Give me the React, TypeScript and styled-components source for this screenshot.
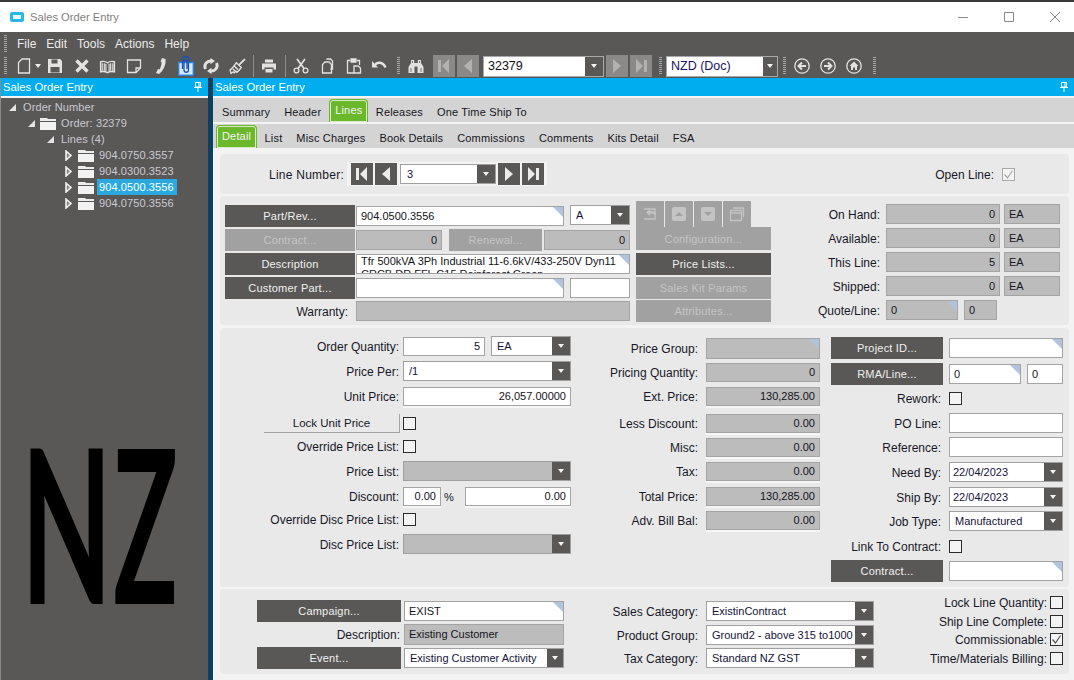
import React, { FC, ReactNode } from "react";
import styled, { createGlobalStyle } from "styled-components";

const GlobalStyle = createGlobalStyle`
  html, body {
    margin: 0;
    height: 680px;
    overflow: hidden;
    background: #f3f3f3;
  }
  * { box-sizing: border-box; }
  body {
    font-family: "Liberation Sans", Arial, sans-serif;
    font-size: 12px;
  }
`;

const Window = styled.div`
  width: 1074px;
  height: 680px;
  display: flex;
  flex-direction: column;
  border-top: 2px solid #3a3a3a;
  overflow: hidden;
`;

const TitleBar = styled.div`
  height: 30px;
  flex: none;
  background: #fff;
  display: flex;
  align-items: center;
  padding-left: 10px;
  color: #808080;
  font-size: 11.2px;
  gap: 6px;
`;

const AppIcon = styled.span`
  width: 14px;
  height: 10px;
  border-radius: 2px;
  border: 3px solid #29b6e8;
  background: #e8f8ff;
`;

const WindowButtons = styled.div`
  margin-left: auto;
  display: flex;
  height: 100%;
  align-items: center;
  color: #888;
`;

const WindowButton = styled.span`
  width: 46px;
  padding-left: 8px;
  display: flex;
  justify-content: center;
`;

const MenuBar = styled.div`
  height: 22px;
  flex: none;
  background: #5a5856;
  display: flex;
  align-items: center;
  color: #ececec;
  padding: 2px 0 0 4px;
`;

const Grip = styled.span`
  width: 3px;
  height: 18px;
  flex: none;
  background: repeating-linear-gradient(to bottom, #a8a8a8 0 1px, transparent 1px 2px);
`;

const MenuItem = styled.span`
  margin-left: 10px;
  &:first-of-type { margin-left: 8px; }
`;

const Toolbar = styled.div`
  height: 24px;
  flex: none;
  background: #5a5856;
  color: #e2e2e2;
  display: flex;
  align-items: center;
  padding-left: 4px;
`;

const Tool = styled.span<{ $w: number; $pl?: number }>`
  width: ${(p) => p.$w}px;
  padding-left: ${(p) => p.$pl ?? 0}px;
  flex: none;
  display: flex;
  align-items: center;
`;

const ToolSep = styled.span`
  width: 1px;
  height: 22px;
  flex: none;
  background: #8f8f8f;
  margin: 0 7px 0 1px;
`;

const NavButton = styled.span<{ $dark?: boolean; $ml?: number }>`
  width: 22px;
  height: 22px;
  flex: none;
  margin-left: ${(p) => p.$ml ?? 0}px;
  display: flex;
  align-items: center;
  justify-content: center;
  background: ${(p) => (p.$dark ? "#5a5856" : "#8b8987")};
  color: ${(p) => (p.$dark ? "#ececec" : "#b4b2b0")};
`;

const ToolCombo = styled.div<{ $w: number; $navy?: boolean }>`
  width: ${(p) => p.$w}px;
  height: 21px;
  flex: none;
  background: #fff;
  border: 1px solid #a8a8a8;
  display: flex;
  align-items: center;
  color: ${(p) => (p.$navy ? "#1a1066" : "#111")};
  font-size: 12.5px;
  padding-left: 4px;
  margin: ${(p) => (p.$navy ? "0" : "0 2px 0 4px")};
`;

const ComboArrow = styled.span<{ $w?: number }>`
  margin-left: auto;
  width: ${(p) => p.$w ?? 18}px;
  align-self: stretch;
  flex: none;
  background: #5a5856;
  position: relative;
  &::after {
    content: "";
    position: absolute;
    left: 50%;
    top: 50%;
    margin: -2px 0 0 -3px;
    border: 3px solid transparent;
    border-top: 4px solid #f4f4f4;
    border-bottom: 0;
  }
`;

const Body = styled.div`
  flex: 1;
  min-height: 0;
  display: flex;
`;

const Sidebar = styled.aside`
  width: 208px;
  flex: none;
  display: flex;
  flex-direction: column;
  border-left: 1px solid #8a8a8a;
  background: #5a5856;
`;

const Splitter = styled.div`
  width: 5px;
  flex: none;
  background: #0d3f60;
`;

const PaneHeader = styled.div`
  height: 18px;
  flex: none;
  background: #00adef;
  color: #fff;
  font-size: 11.3px;
  display: flex;
  align-items: center;
  justify-content: space-between;
  padding: 0 6px 0 2px;
`;

const WhiteLine = styled.div`
  height: 2px;
  flex: none;
  background: #f4f4f4;
`;

const Tree = styled.div`
  padding-top: 1px;
  color: #c9c9d2;
  font-size: 11px;
  letter-spacing: 0.1px;
`;

const TreeRow = styled.div<{ $depth: number }>`
  height: 16px;
  display: flex;
  align-items: center;
  padding-left: ${(p) => p.$depth}px;
`;

const TreeText = styled.span<{ $selected?: boolean }>`
  padding: 0 2px;
  line-height: 16px;
  margin-left: 3px;
  background: ${(p) => (p.$selected ? "#29a9e0" : "transparent")};
  color: ${(p) => (p.$selected ? "#fff" : "inherit")};
  width: ${(p) => (p.$selected ? "80px" : "auto")};
  white-space: nowrap;
`;

const Twist = styled.span<{ $gap: number }>`
  display: flex;
  margin-right: ${(p) => p.$gap}px;
  color: #e4e4e4;
`;

const Logo = styled.div`
  margin-top: 231px;
  padding-left: 20px;
  height: 160px;
  font-family: Lato, sans-serif;
  font-weight: 700;
  font-size: 214px;
  line-height: 160px;
  color: #000;
  letter-spacing: 2px;
  white-space: nowrap;
  transform: scaleX(0.553);
  transform-origin: 20px 0;
`;

const LogoNarrow = styled.span`
  display: inline-block;
  transform: scaleX(0.9);
  transform-origin: 0 0;
`;

const Main = styled.main`
  flex: 1;
  min-width: 0;
  display: flex;
  flex-direction: column;
`;

const TabRow = styled.div`
  height: 24px;
  flex: none;
  background: #d4d4d4;
  display: flex;
  align-items: flex-end;
  padding-left: 2px;
  font-size: 11px;
  letter-spacing: 0.16px;
  color: #161622;
`;

const Tab = styled.span<{ $active?: boolean }>`
  height: ${(p) => (p.$active ? "23px" : "21px")};
  display: flex;
  align-items: center;
  padding: ${(p) => (p.$active ? "0 5px 2px" : "0 7px")};
  margin: ${(p) => (p.$active ? "0 0.5px 0 1px" : "0")};
  ${(p) =>
    p.$active
      ? `background: #6cb82c;
         color: #f4f4f4;
         border: 1px solid #6cb82c;
         box-shadow: inset 0 0 0 1px #d8ecc8;
         border-bottom: 0;
         border-radius: 4px 4px 0 0;`
      : ""}
`;

const Content = styled.div`
  flex: 1;
  padding: 6px 5px 0 7px;
  display: flex;
  flex-direction: column;
  gap: 2px;
  background: #f3f3f3;
`;

const Panel = styled.section<{ $h: number; $mb?: number }>`
  height: ${(p) => p.$h}px;
  margin-bottom: ${(p) => p.$mb ?? 0}px;
  flex: none;
  background: #e9e9e9;
  border-radius: 4px;
  display: flex;
`;

const LineBar = styled(Panel)`
  align-items: center;
  justify-content: space-between;
  padding: 0 54px 0 49px;
`;

const LineNav = styled.div`
  display: flex;
  align-items: center;
  gap: 2px;
  margin-left: 3px;
  padding: 1px 3px 1px 4px;
  background: #f3f3f3;
`;

const Inline = styled.div<{ $gap?: number }>`
  display: flex;
  align-items: center;
  gap: ${(p) => p.$gap ?? 0}px;
`;

const Column = styled.div<{ $label: number; $gap: number; $top?: number; $left?: number }>`
  --label-w: ${(p) => p.$label}px;
  --row-gap: ${(p) => p.$gap}px;
  padding-top: ${(p) => p.$top ?? 0}px;
  margin-left: ${(p) => p.$left ?? 0}px;
  display: flex;
  flex-direction: column;
  flex: none;
`;

const Row = styled.div<{ $mt?: number; $h?: number }>`
  height: ${(p) => p.$h ?? 20}px;
  margin-top: ${(p) => p.$mt ?? 0}px;
  display: flex;
  align-items: center;
  gap: var(--row-gap);
`;

const Label = styled.span<{ $pr?: number; $w?: number }>`
  width: ${(p) => (p.$w ? `${p.$w}px` : "var(--label-w)")};
  flex: none;
  text-align: right;
  padding: 2px ${(p) => p.$pr ?? 0}px 0 0;
  color: #181828;
  white-space: nowrap;
`;

const LineLabel = styled(Label)`
  letter-spacing: 0.25px;
`;

const Percent = styled.span`
  width: 10px;
  flex: none;
  margin-left: -1px;
  padding-top: 2px;
  font-size: 11px;
  color: #181828;
`;

const Field = styled.div<{
  $w: number;
  $h?: number;
  $ro?: boolean;
  $right?: boolean;
  $flag?: boolean;
  $under?: boolean;
  $wrap?: boolean;
  $ml?: number;
}>`
  position: relative;
  width: ${(p) => p.$w}px;
  height: ${(p) => p.$h ?? 20}px;
  flex: none;
  margin-left: ${(p) => p.$ml ?? 0}px;
  display: flex;
  align-items: ${(p) => (p.$wrap ? "flex-start" : "center")};
  justify-content: ${(p) => (p.$right ? "flex-end" : "flex-start")};
  padding: 0 4px;
  font-size: 11px;
  line-height: 13px;
  color: #141420;
  overflow: hidden;
  white-space: ${(p) => (p.$wrap ? "normal" : "nowrap")};
  background: ${(p) => (p.$ro ? "#bcbcbc" : "#fff")};
  border: 1px solid #a4a4a4;
  ${(p) => (p.$under ? "box-shadow: 0 2px 0 #f6f6f6;" : "")}
  ${(p) =>
    p.$flag
      ? `&::after {
           content: "";
           position: absolute;
           top: 0;
           right: 0;
           border-top: 10px solid #b0c4de;
           border-left: 10px solid transparent;
         }`
      : ""}
`;

const Combo = styled.div<{ $w: number; $ro?: boolean; $pl?: number; $ml?: number; $up?: number }>`
  width: ${(p) => p.$w}px;
  height: 20px;
  flex: none;
  margin-left: ${(p) => p.$ml ?? 0}px;
  margin-top: ${(p) => -(p.$up ?? 0)}px;
  display: flex;
  align-items: center;
  padding-left: ${(p) => p.$pl ?? 5}px;
  font-size: 11px;
  color: #14143c;
  overflow: hidden;
  white-space: nowrap;
  background: ${(p) => (p.$ro ? "#bcbcbc" : "#fff")};
  border: 1px solid #a0a0a0;
`;

const ComboText = styled.span`
  flex: 1;
  min-width: 0;
  overflow: hidden;
`;

const Button = styled.div<{ $w: number; $off?: boolean; $h?: number; $ml?: number; $mr?: number; $mt?: number }>`
  width: ${(p) => p.$w}px;
  height: ${(p) => p.$h ?? 22}px;
  flex: none;
  margin-left: ${(p) => p.$ml ?? 0}px;
  margin-right: ${(p) => p.$mr ?? 0}px;
  margin-top: ${(p) => p.$mt ?? 0}px;
  display: flex;
  align-items: center;
  justify-content: center;
  font-size: 11px;
  letter-spacing: 0.2px;
  background: ${(p) => (p.$off ? "#a1a1a1" : "#5a5856")};
  color: ${(p) => (p.$off ? "#c4c4c4" : "#f0f0f0")};
`;

const LockButton = styled.div`
  width: 136px;
  height: 19px;
  flex: none;
  margin-left: 44px;
  margin-right: -1px;
  display: flex;
  align-items: center;
  justify-content: center;
  font-size: 11.5px;
  color: #181828;
  border-right: 1px solid #a4a4a4;
  border-bottom: 1px solid #a4a4a4;
`;

const Check = styled.span<{ $muted?: boolean }>`
  width: 13px;
  height: 13px;
  flex: none;
  display: flex;
  align-items: center;
  justify-content: center;
  background: #f4f4f4;
  border: 1px solid ${(p) => (p.$muted ? "#a8a8a8" : "#2c2c2c")};
  color: ${(p) => (p.$muted ? "#a8a8a8" : "#555")};
`;

const Stack = styled.div<{ $gap: number; $top: number; $left: number }>`
  display: flex;
  flex-direction: column;
  gap: ${(p) => p.$gap}px;
  padding-top: ${(p) => p.$top}px;
  margin-left: ${(p) => p.$left}px;
  flex: none;
`;

const IconTabs = styled.div`
  display: flex;
  gap: 1px;
`;

const IconTab = styled.span`
  width: 28px;
  height: 26px;
  display: flex;
  align-items: center;
  justify-content: center;
  background: #a1a1a1;
  color: #c4c4c4;
`;

const Ico: FC<{ size?: number; children: ReactNode }> = ({ size = 16, children }) => (
  <svg width={size} height={size} viewBox="0 0 16 16" fill="none" stroke="currentColor" strokeWidth="1.3">
    {children}
  </svg>
);

const Pin = () => (
  <svg width="8" height="10" viewBox="0 0 8 10" fill="none" stroke="#fff" strokeWidth="1">
    <path d="M1.5.5h5v4.5h-5zM0 5.5h8M4 5.5V10M5 1v4" />
  </svg>
);

const Folder = () => (
  <svg width="16" height="13" viewBox="0 0 16 13">
    <path d="M0 1h7l1 1h8v2H0z" fill="#ececec" />
    <path d="M0 5h16v8H0z" fill="#f2f2f2" />
  </svg>
);

const TwistOpen = () => (
  <svg width="7" height="7" viewBox="0 0 7 7">
    <path d="M7 0v7H0z" fill="currentColor" />
  </svg>
);

const TwistClosed = () => (
  <svg width="7" height="11" viewBox="0 0 7 11" fill="#8a8a8a" stroke="#f0f0f0" strokeWidth="1.6">
    <path d="M1 1l5 4.5L1 10z" />
  </svg>
);

const NavGlyph: FC<{ kind: "first" | "prev" | "next" | "last" }> = ({ kind }) => (
  <svg width="16" height="16" viewBox="0 0 16 16" fill="currentColor">
    {kind === "first" && <path d="M2 2h3v12H2zM13 1v14L6 8z" />}
    {kind === "prev" && <path d="M12 1v14L4 8z" />}
    {kind === "next" && <path d="M4 1v14l8-7z" />}
    {kind === "last" && <path d="M11 2h3v12h-3zM3 1v14l7-7z" />}
  </svg>
);

const RoundIcon: FC<{ kind: "back" | "forward" | "home" }> = ({ kind }) => (
  <Ico>
    <circle cx="8" cy="8" r="7.2" />
    {kind === "back" && <path d="M12 8H5M8 4.5L4.5 8 8 11.5" strokeWidth="2" />}
    {kind === "forward" && <path d="M4 8h7M8 4.5L11.5 8 8 11.5" strokeWidth="2" />}
    {kind === "home" && <path d="M8 3.5L3.5 8H5v4h2V9.5h2V12h2V8h1.5z" fill="currentColor" stroke="none" />}
  </Ico>
);

const ToolbarIcons = () => (
  <>
    <Tool $w={19}>
      <Ico>
        <path d="M6 1h7.5v14h-11V4.5z" />
      </Ico>
    </Tool>
    <Tool $w={12}>
      <svg width="6" height="4" viewBox="0 0 6 4">
        <path d="M0 0h6L3 4z" fill="#eee" />
      </svg>
    </Tool>
    <Tool $w={27}>
      <Ico>
        <path
          d="M1 1h12l2 2v12H1z M4.5 1.5v4h6v-4z M3.5 9v5.5h9V9z"
          fill="currentColor"
          fillRule="evenodd"
          stroke="none"
        />
      </Ico>
    </Tool>
    <Tool $w={25}>
      <Ico>
        <path d="M2.5 2.5l11 11M13.5 2.5l-11 11" strokeWidth="3.4" />
      </Ico>
    </Tool>
    <Tool $w={27}>
      <Ico size={17}>
        <path d="M8 4.5C6 3 3.5 3 1.5 3.5V13c2-.5 4.5-.5 6.5.8 2-1.3 4.5-1.3 6.5-.8V3.5C12.5 3 10 3 8 4.5z" />
        <path d="M3 5v7.5M5 5v7M6.5 5.5v7M9.5 5.5v7M11 5v7M13 5v7.5" strokeWidth="1.1" />
      </Ico>
    </Tool>
    <Tool $w={29}>
      <Ico>
        <path d="M1.5 2h13v8L10 14.5H1.5zM14.5 10H10v4.5" />
      </Ico>
    </Tool>
    <Tool $w={23}>
      <svg width="11" height="17" viewBox="0 0 11 17">
        <path d="M7 0l3.5 1c.8 5-2 12-6.500 15L1 15l2-4 1.500.6C6 9 6.500 6.500 6.500 4L5.500 3.500z" fill="#e2e2e2" />
      </svg>
    </Tool>
    <Tool $w={25}>
      <svg width="16" height="20" viewBox="0 0 16 20" fill="none">
        <path d="M.7 6.5h14.600v12.800H.7z" fill="#d6ebfb" stroke="#2a86e0" strokeWidth="1.4" />
        <path d="M4.500 13V3c0-3 6-3 6 0v11c0 3-4.500 3-4.500 0V5c0-1.500 3-1.500 3 0v8" stroke="#1a52b8" strokeWidth="1.3" />
      </svg>
    </Tool>
    <Tool $w={26}>
      <Ico>
        <path d="M2.5 11C.5 6.5 4 2.5 8.5 3" strokeWidth="3" />
        <path d="M13.5 5c2 4.500-1.500 8.500-6 8" strokeWidth="3" />
        <path d="M7.5 0L12 3 7.500 6.200zM8.500 9.800L4 13l4.500 3z" fill="currentColor" stroke="none" />
      </Ico>
    </Tool>
    <Tool $w={23}>
      <Ico size={17}>
        <path d="M15 1L9.5 6.500" strokeWidth="1.8" />
        <path d="M7 4.500l4.500 4.500-2 2.500-2 2-1-1-1.500 1.500-1-1L2 14.500 1 11.500 3 9.500z" />
        <path d="M5 7.500l3.500 3.500M3.500 10L6 12.500" />
      </Ico>
    </Tool>
    <ToolSep />
    <Tool $w={23}>
      <Ico>
        <path d="M4 1.5h8v3H4z" fill="currentColor" stroke="none" />
        <path d="M1 5.5h14v6h-2.500v-2h-9v2H1z" fill="currentColor" stroke="none" />
        <path d="M4.500 11h7v3.500h-7z" fill="currentColor" stroke="none" />
      </Ico>
    </Tool>
    <ToolSep />
    <Tool $w={27}>
      <Ico>
        <circle cx="3.5" cy="12.5" r="2.4" />
        <circle cx="12.5" cy="12.5" r="2.4" />
        <path d="M5 10.500L12 1M11 10.500L4 1" strokeWidth="1.7" />
      </Ico>
    </Tool>
    <Tool $w={26}>
      <Ico>
        <path d="M6.500 1h4l2 2v8h-2" />
        <path d="M5 4h4l2.500 2.500v8.500h-9V6.500z" />
      </Ico>
    </Tool>
    <Tool $w={25}>
      <Ico>
        <path d="M4 2.500H1.500V15H8M11 2.500h2.500V7" />
        <path d="M5 1h5v3H5z" fill="currentColor" />
        <path d="M8 8h4l2.500 2v5H8z" />
      </Ico>
    </Tool>
    <Tool $w={26}>
      <Ico>
        <path d="M3.500 7.500C6 3.500 12 3.500 14.500 9.500" strokeWidth="2.4" />
        <path d="M1 3v6.500h6z" fill="currentColor" stroke="none" />
      </Ico>
    </Tool>
    <Tool $w={11}>
      <Grip />
    </Tool>
    <Tool $w={25}>
      <Ico>
        <path d="M3 2h3.200v3h3.600V2H13v3l2.500 4v6h-6V8.500h-3V15h-6V9L3 5z" fill="currentColor" stroke="none" />
        <path d="M4.500 3v2M11.500 3v2M3 10v4M13 10v4" stroke="#5a5856" strokeWidth=".8" />
      </Ico>
    </Tool>
  </>
);

const treeLines = [
  { no: "904.0750.3557" },
  { no: "904.0300.3523" },
  { no: "904.0500.3556", selected: true },
  { no: "904.0750.3556" },
];

const topTabs = ["Summary", "Header", "Lines", "Releases", "One Time Ship To"];
const subTabs = ["Detail", "List", "Misc Charges", "Book Details", "Commissions", "Comments", "Kits Detail", "FSA"];

const stock = [
  { label: "On Hand:", value: "0" },
  { label: "Available:", value: "0" },
  { label: "This Line:", value: "5" },
  { label: "Shipped:", value: "0" },
];

const totals = [
  { label: "Ext. Price:", value: "130,285.00", mt: 4 },
  { label: "Less Discount:", value: "0.00", mt: 7 },
  { label: "Misc:", value: "0.00", mt: 4 },
  { label: "Tax:", value: "0.00", mt: 4 },
  { label: "Total Price:", value: "130,285.00", mt: 5 },
  { label: "Adv. Bill Bal:", value: "0.00", mt: 4 },
];

const SmallCheck = () => (
  <svg width="11" height="11" viewBox="0 0 11 11" fill="none" stroke="currentColor" strokeWidth="1.2">
    <path d="M1.5 5.5l3 3.500 5-7.500" />
  </svg>
);

export default function App() {
  return (
    <Window>
      <GlobalStyle />
      <TitleBar>
        <AppIcon />
        Sales Order Entry
        <WindowButtons>
          <WindowButton>
            <svg width="10" height="10" viewBox="0 0 10 10" stroke="currentColor">
              <path d="M0 5.5h10" />
            </svg>
          </WindowButton>
          <WindowButton>
            <svg width="10" height="10" viewBox="0 0 10 10" stroke="currentColor" fill="none">
              <path d="M.5.5h9v9h-9z" />
            </svg>
          </WindowButton>
          <WindowButton>
            <svg width="10" height="10" viewBox="0 0 10 10" stroke="currentColor">
              <path d="M0 0l10 10M10 0L0 10" />
            </svg>
          </WindowButton>
        </WindowButtons>
      </TitleBar>

      <MenuBar>
        <Grip />
        <MenuItem>File</MenuItem>
        <MenuItem>Edit</MenuItem>
        <MenuItem>Tools</MenuItem>
        <MenuItem>Actions</MenuItem>
        <MenuItem>Help</MenuItem>
      </MenuBar>

      <Toolbar>
        <Tool $w={12}>
          <Grip />
        </Tool>
        <ToolbarIcons />
        <NavButton>
          <NavGlyph kind="first" />
        </NavButton>
        <NavButton $ml={2}>
          <NavGlyph kind="prev" />
        </NavButton>
        <ToolCombo $w={121}>
          32379
          <ComboArrow />
        </ToolCombo>
        <NavButton>
          <NavGlyph kind="next" />
        </NavButton>
        <NavButton $ml={2}>
          <NavGlyph kind="last" />
        </NavButton>
        <Tool $w={14} $pl={7}>
          <Grip />
        </Tool>
        <ToolCombo $w={112} $navy>
          NZD (Doc)
          <ComboArrow $w={14} />
        </ToolCombo>
        <Tool $w={16} $pl={5}>
          <Grip />
        </Tool>
        <Tool $w={26}>
          <RoundIcon kind="back" />
        </Tool>
        <Tool $w={26}>
          <RoundIcon kind="forward" />
        </Tool>
        <Tool $w={27}>
          <RoundIcon kind="home" />
        </Tool>
        <Grip />
      </Toolbar>

      <Body>
        <Sidebar>
          <PaneHeader>
            Sales Order Entry
            <Pin />
          </PaneHeader>
          <WhiteLine />
          <Tree>
            <TreeRow $depth={8}>
              <Twist $gap={2}>
                <TwistOpen />
              </Twist>
              <TreeText>Order Number</TreeText>
            </TreeRow>
            <TreeRow $depth={27}>
              <Twist $gap={5}>
                <TwistOpen />
              </Twist>
              <Folder />
              <TreeText>Order: 32379</TreeText>
            </TreeRow>
            <TreeRow $depth={46}>
              <Twist $gap={2}>
                <TwistOpen />
              </Twist>
              <TreeText>Lines (4)</TreeText>
            </TreeRow>
            {treeLines.map((line) => (
              <TreeRow $depth={64} key={line.no}>
                <Twist $gap={6}>
                  <TwistClosed />
                </Twist>
                <Folder />
                <TreeText $selected={line.selected}>{line.no}</TreeText>
              </TreeRow>
            ))}
          </Tree>
          <Logo>
            N<LogoNarrow>Z</LogoNarrow>
          </Logo>
        </Sidebar>
        <Splitter />
        <Main>
          <PaneHeader>
            Sales Order Entry
            <Pin />
          </PaneHeader>
          <WhiteLine />
          <TabRow>
            {topTabs.map((t) => (
              <Tab key={t} $active={t === "Lines"}>
                {t}
              </Tab>
            ))}
          </TabRow>
          <WhiteLine />
          <TabRow>
            {subTabs.map((t) => (
              <Tab key={t} $active={t === "Detail"}>
                {t}
              </Tab>
            ))}
          </TabRow>

          <Content>
            <LineBar $h={40}>
              <Inline>
                <LineLabel $w={75}>Line Number:</LineLabel>
                <LineNav>
                  <NavButton $dark>
                    <NavGlyph kind="first" />
                  </NavButton>
                  <NavButton $dark>
                    <NavGlyph kind="prev" />
                  </NavButton>
                  <Combo $w={96} $pl={6} $ml={1}>
                    <ComboText>3</ComboText>
                    <ComboArrow />
                  </Combo>
                  <NavButton $dark>
                    <NavGlyph kind="next" />
                  </NavButton>
                  <NavButton $dark>
                    <NavGlyph kind="last" />
                  </NavButton>
                </LineNav>
              </Inline>
              <Inline $gap={8}>
                <Label>Open Line:</Label>
                <Check $muted>
                  <SmallCheck />
                </Check>
              </Inline>
            </LineBar>

            <Panel $h={129} $mb={1}>
              <Stack $gap={2} $top={9} $left={5}>
                <Inline>
                  <Button $w={130} $mr={1}>
                    Part/Rev...
                  </Button>
                  <Field $w={208} $flag>
                    904.0500.3556
                  </Field>
                  <Combo $w={60} $ml={6} $up={2}>
                    <ComboText>A</ComboText>
                    <ComboArrow />
                  </Combo>
                </Inline>
                <Inline>
                  <Button $w={130} $off $mr={1}>
                    Contract...
                  </Button>
                  <Field $w={86} $ro $right>
                    0
                  </Field>
                  <Button $w={93} $off $ml={7} $mr={2}>
                    Renewal...
                  </Button>
                  <Field $w={86} $ro $right>
                    0
                  </Field>
                </Inline>
                <Inline>
                  <Button $w={130} $mr={1}>
                    Description
                  </Button>
                  <Field $w={274} $flag $wrap>
                    Tfr 500kVA 3Ph Industrial 11-6.6kV/433-250V Dyn11 CRCB DR FFL C15 Reinforest Green
                  </Field>
                </Inline>
                <Inline>
                  <Button $w={130} $mr={1}>
                    Customer Part...
                  </Button>
                  <Field $w={208} $flag />
                  <Field $w={60} $ml={6} />
                </Inline>
                <Inline>
                  <Label $w={123}>Warranty:</Label>
                  <Field $w={274} $ro $ml={8} />
                </Inline>
              </Stack>

              <Stack $gap={2} $top={5} $left={6}>
                <IconTabs>
                  <IconTab>
                    <Ico>
                      <path d="M2 3h11v10H2" />
                      <path d="M14 9c0-3-3-4-6-4V3L4 6.5 8 10V7.5c2 0 4 0 6 1.5z" fill="currentColor" stroke="none" />
                    </Ico>
                  </IconTab>
                  <IconTab>
                    <Ico>
                      <rect x="1" y="1" width="14" height="14" rx="2" fill="currentColor" stroke="none" />
                      <path d="M4 10l4-4 4 4z" fill="#a1a1a1" stroke="none" />
                    </Ico>
                  </IconTab>
                  <IconTab>
                    <Ico>
                      <rect x="1" y="1" width="14" height="14" rx="2" fill="currentColor" stroke="none" />
                      <path d="M4 6l4 4 4-4z" fill="#a1a1a1" stroke="none" />
                    </Ico>
                  </IconTab>
                  <IconTab>
                    <Ico>
                      <path d="M1.5 4.5h11v10h-11zM1.5 7h11M4 2h10.500v9" />
                    </Ico>
                  </IconTab>
                </IconTabs>
                <Button $w={135} $off $h={23} $mt={-2}>
                  Configuration...
                </Button>
                <Button $w={135} $mt={1}>
                  Price Lists...
                </Button>
                <Button $w={135} $off>
                  Sales Kit Params
                </Button>
                <Button $w={135} $off $mt={-1}>
                  Attributes...
                </Button>
              </Stack>

              <Column $label={109} $gap={6} $top={8}>
                {stock.map((s, i) => (
                  <Row key={s.label} $mt={i ? 4 : 0}>
                    <Label>{s.label}</Label>
                    <Field $w={114} $ro $right>
                      {s.value}
                    </Field>
                    <Field $w={56} $ro $ml={-2}>
                      EA
                    </Field>
                  </Row>
                ))}
                <Row $mt={4}>
                  <Label>Quote/Line:</Label>
                  <Field $w={72} $ro $flag>
                    0
                  </Field>
                  <Field $w={33} $ro>
                    0
                  </Field>
                </Row>
              </Column>
            </Panel>

            <Panel $h={259}>
              <Column $label={179} $gap={4} $top={8}>
                <Row>
                  <Label>Order Quantity:</Label>
                  <Field $w={82} $h={19} $right>
                    5
                  </Field>
                  <Combo $w={80} $ml={2}>
                    <ComboText>EA</ComboText>
                    <ComboArrow />
                  </Combo>
                </Row>
                <Row $mt={5}>
                  <Label>Price Per:</Label>
                  <Combo $w={168}>
                    <ComboText>/1</ComboText>
                    <ComboArrow />
                  </Combo>
                </Row>
                <Row $mt={5}>
                  <Label>Unit Price:</Label>
                  <Field $w={168} $h={19} $right $under>
                    26,057.00000
                  </Field>
                </Row>
                <Row $mt={7}>
                  <LockButton>Lock Unit Price</LockButton>
                  <Check />
                </Row>
                <Row $mt={3}>
                  <Label>Override Price List:</Label>
                  <Check />
                </Row>
                <Row $mt={5}>
                  <Label>Price List:</Label>
                  <Combo $w={168} $ro>
                    <ComboText />
                    <ComboArrow />
                  </Combo>
                </Row>
                <Row $mt={5}>
                  <Label>Discount:</Label>
                  <Field $w={38} $h={19} $right $under>
                    0.00
                  </Field>
                  <Percent>%</Percent>
                  <Field $w={106} $h={19} $right $under $ml={7}>
                    0.00
                  </Field>
                </Row>
                <Row $mt={3}>
                  <Label>Override Disc Price List:</Label>
                  <Check />
                </Row>
                <Row $mt={5}>
                  <Label>Disc Price List:</Label>
                  <Combo $w={168} $ro>
                    <ComboText />
                    <ComboArrow />
                  </Combo>
                </Row>
              </Column>

              <Column $label={127} $gap={8} $top={10}>
                <Row>
                  <Label>Price Group:</Label>
                  <Field $w={114} $h={21} $ro $flag />
                </Row>
                <Row $mt={4}>
                  <Label>Pricing Quantity:</Label>
                  <Field $w={114} $h={19} $ro $right>
                    0
                  </Field>
                </Row>
                {totals.map((t) => (
                  <Row key={t.label} $mt={t.mt}>
                    <Label>{t.label}</Label>
                    <Field $w={114} $h={19} $ro $right $under>
                      {t.value}
                    </Field>
                  </Row>
                ))}
              </Column>

              <Column $label={110} $gap={8} $top={10} $left={11}>
                <Row>
                  <Button $w={112} $mr={-2}>
                    Project ID...
                  </Button>
                  <Field $w={114} $flag />
                </Row>
                <Row $mt={6}>
                  <Button $w={112} $mr={-2}>
                    RMA/Line...
                  </Button>
                  <Field $w={72} $flag>
                    0
                  </Field>
                  <Field $w={36} $ml={-2}>
                    0
                  </Field>
                </Row>
                <Row $mt={4}>
                  <Label>Rework:</Label>
                  <Check />
                </Row>
                <Row $mt={5}>
                  <Label>PO Line:</Label>
                  <Field $w={114} />
                </Row>
                <Row $mt={4}>
                  <Label>Reference:</Label>
                  <Field $w={114} />
                </Row>
                <Row $mt={5}>
                  <Label>Need By:</Label>
                  <Combo $w={114} $pl={3}>
                    <ComboText>22/04/2023</ComboText>
                    <ComboArrow />
                  </Combo>
                </Row>
                <Row $mt={5}>
                  <Label>Ship By:</Label>
                  <Combo $w={114} $pl={3}>
                    <ComboText>22/04/2023</ComboText>
                    <ComboArrow />
                  </Combo>
                </Row>
                <Row $mt={4}>
                  <Label>Job Type:</Label>
                  <Combo $w={114}>
                    <ComboText>Manufactured</ComboText>
                    <ComboArrow />
                  </Combo>
                </Row>
                <Row $mt={5}>
                  <Label>Link To Contract:</Label>
                  <Check />
                </Row>
                <Row $mt={5}>
                  <Button $w={112} $mr={-2}>
                    Contract...
                  </Button>
                  <Field $w={114} $flag />
                </Row>
              </Column>
            </Panel>

            <Panel $h={85}>
              <Column $label={144} $gap={3} $top={12} $left={37}>
                <Row>
                  <Button $w={144}>Campaign...</Button>
                  <Field $w={160} $flag>
                    EXIST
                  </Field>
                </Row>
                <Row $mt={3}>
                  <Label $pr={1}>Description:</Label>
                  <Field $w={160} $h={21} $ro>
                    Existing Customer
                  </Field>
                </Row>
                <Row $mt={4}>
                  <Button $w={144}>Event...</Button>
                  <Combo $w={160}>
                    <ComboText>Existing Customer Activity</ComboText>
                    <ComboArrow $w={16} />
                  </Combo>
                </Row>
              </Column>

              <Column $label={134} $gap={8} $top={12}>
                <Row>
                  <Label>Sales Category:</Label>
                  <Combo $w={168}>
                    <ComboText>ExistinContract</ComboText>
                    <ComboArrow />
                  </Combo>
                </Row>
                <Row $mt={4}>
                  <Label>Product Group:</Label>
                  <Combo $w={168}>
                    <ComboText>Ground2 - above 315 to1000</ComboText>
                    <ComboArrow />
                  </Combo>
                </Row>
                <Row $mt={3}>
                  <Label>Tax Category:</Label>
                  <Combo $w={168}>
                    <ComboText>Standard NZ GST</ComboText>
                    <ComboArrow />
                  </Combo>
                </Row>
              </Column>

              <Column $label={173} $gap={3} $top={4}>
                <Row $h={18}>
                  <Label>Lock Line Quantity:</Label>
                  <Check />
                </Row>
                <Row $h={18} $mt={1}>
                  <Label>Ship Line Complete:</Label>
                  <Check />
                </Row>
                <Row $h={18}>
                  <Label>Commissionable:</Label>
                  <Check>
                    <SmallCheck />
                  </Check>
                </Row>
                <Row $h={18} $mt={1}>
                  <Label>Time/Materials Billing:</Label>
                  <Check />
                </Row>
              </Column>
            </Panel>
          </Content>
        </Main>
      </Body>
    </Window>
  );
}
